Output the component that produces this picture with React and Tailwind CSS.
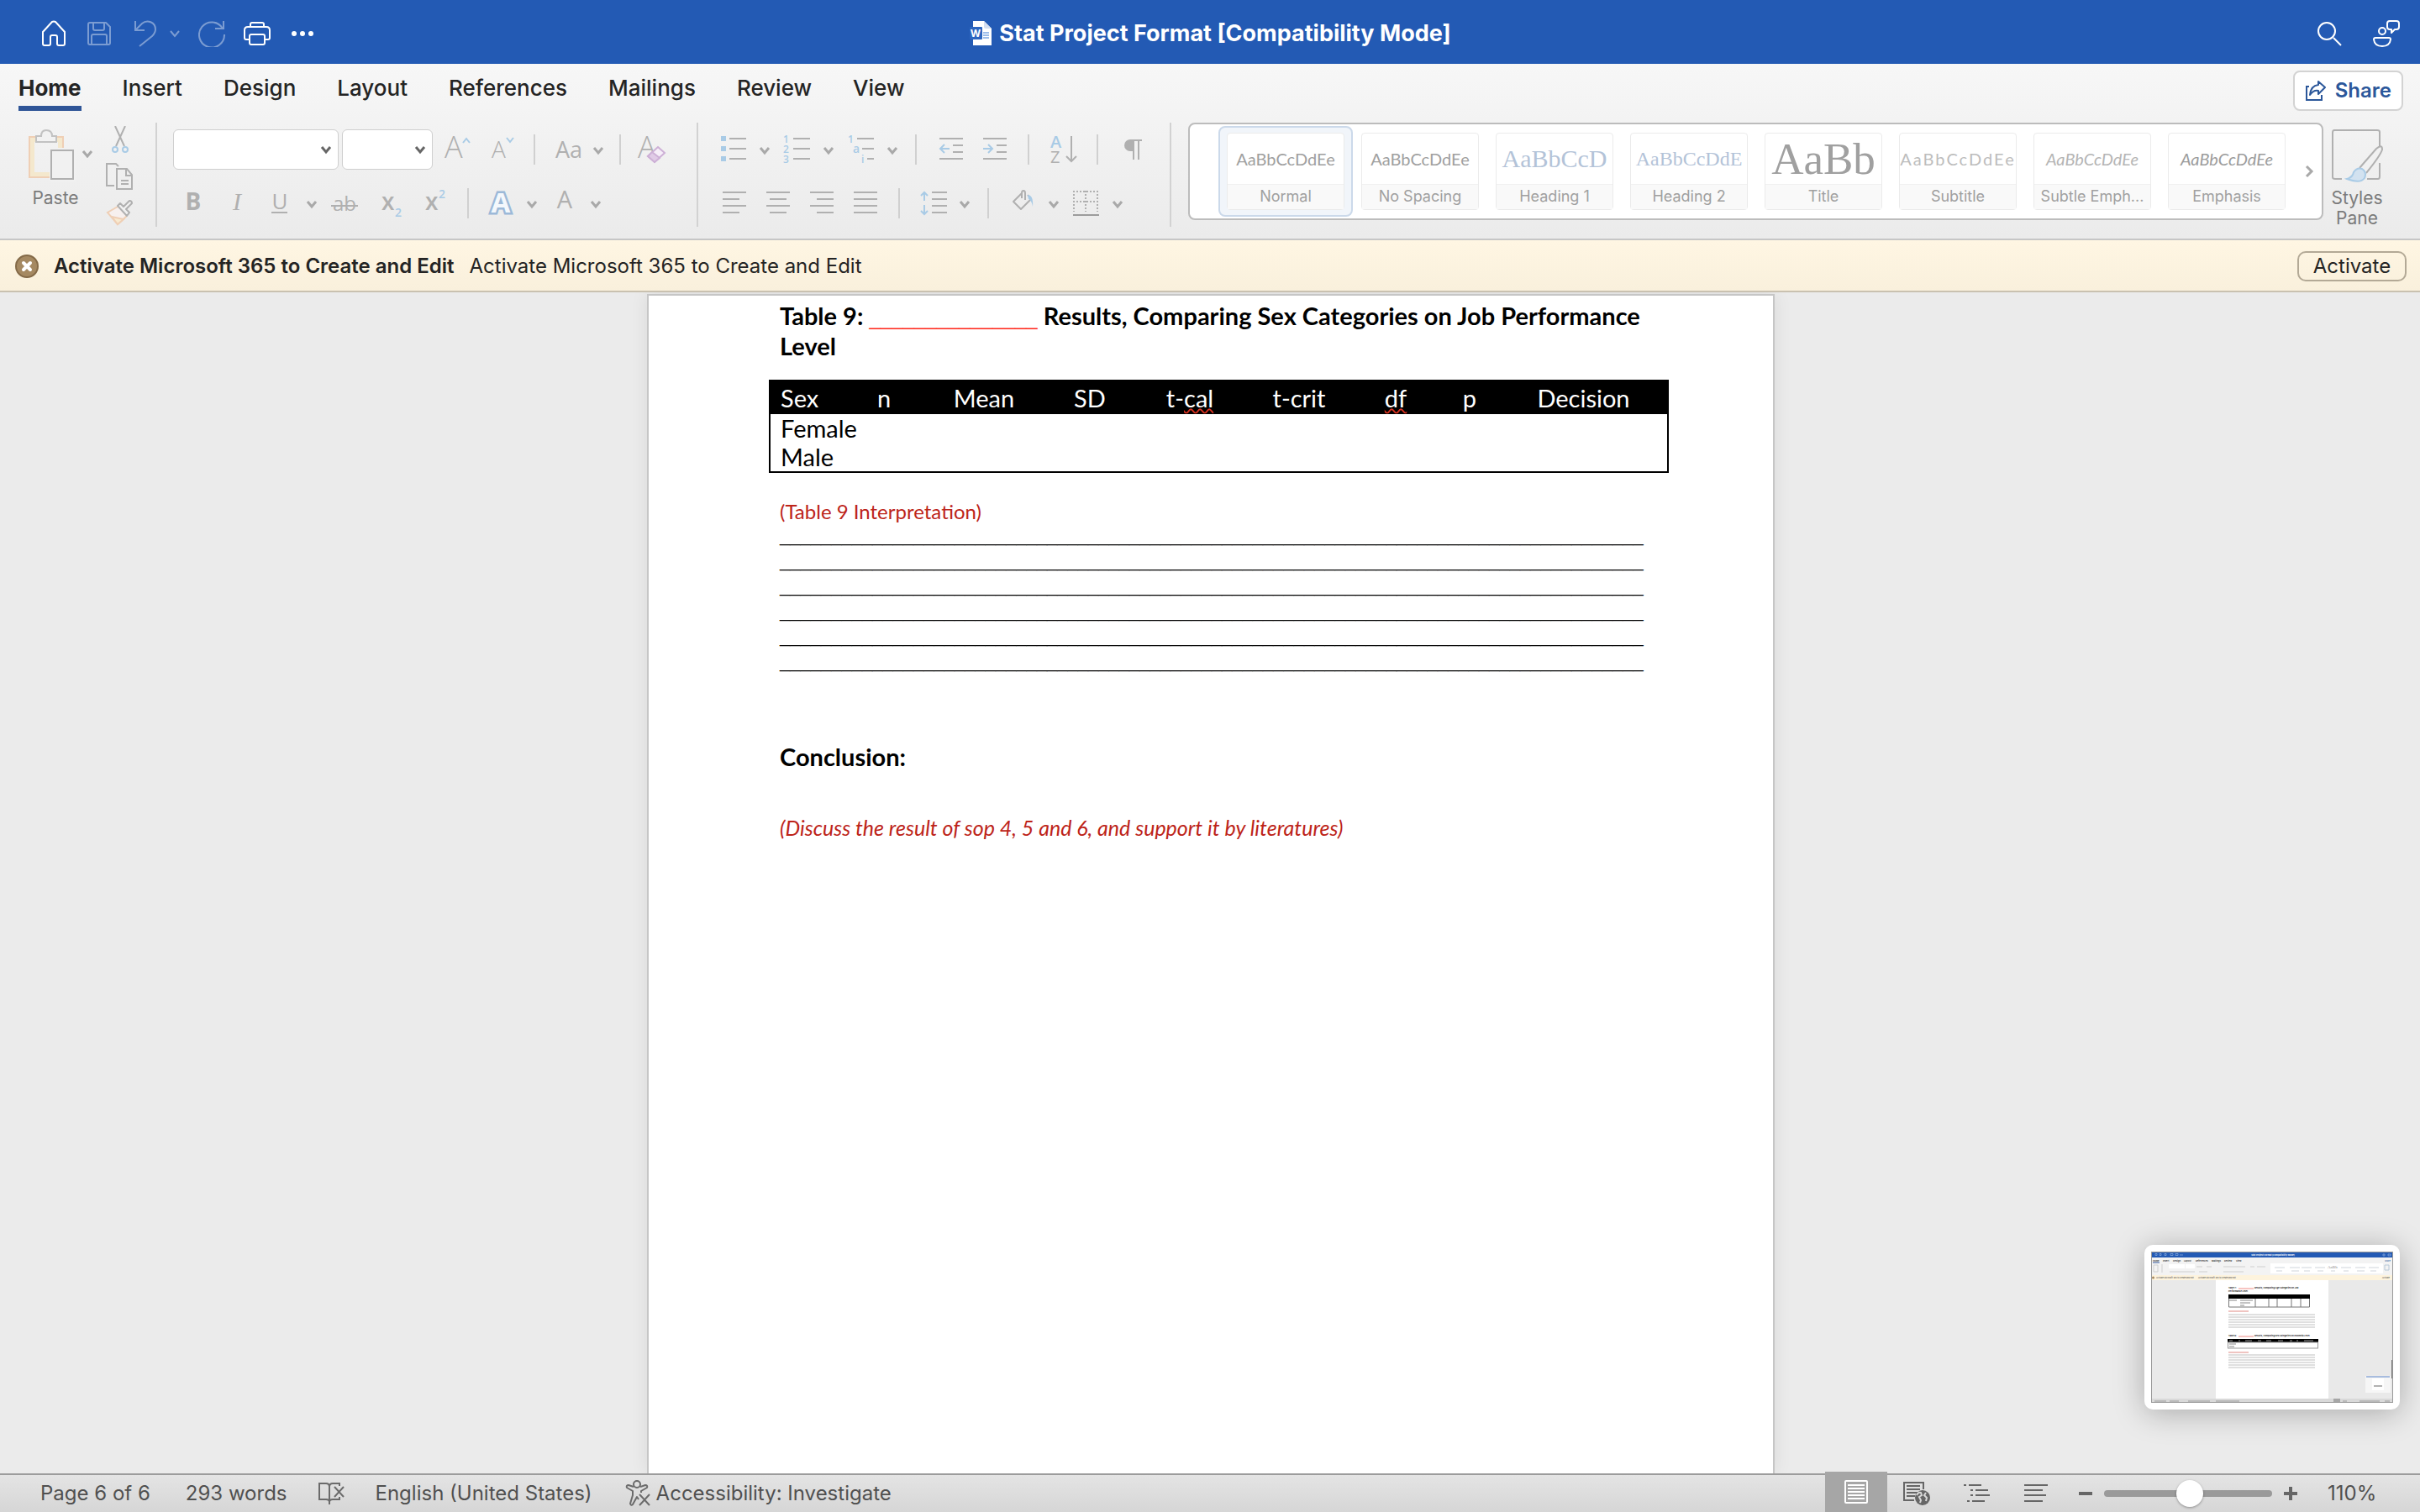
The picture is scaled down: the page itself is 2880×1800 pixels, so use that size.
import React, { Component } from "react";

const GRAY = "#b0b0b0";
const BLUE = "#a9cbe6";

/* Ribbon glyph, one full cell of a ribbon row */
const Glyph = ({ label, children }) => (
  <button
    type="button"
    aria-label={label}
    className="w-[52px] h-16 shrink-0 text-[#b0b0b0]"
  >
    <svg
      width="52"
      height="64"
      viewBox="0 0 52 64"
      fill="none"
      stroke={GRAY}
      strokeWidth="2"
      fontFamily="'Open Sans', sans-serif"
    >
      {children}
    </svg>
  </button>
);

const Letter = ({ x, y, size, color = GRAY, weight = 400, ...rest }) => (
  <text
    x={x}
    y={y}
    fontSize={size}
    fontWeight={weight}
    fill={color}
    stroke="none"
    {...rest}
  />
);

const Chevron = ({ label }) => (
  <button type="button" aria-label={label} className="w-6 h-16 shrink-0">
    <svg width="24" height="64" viewBox="0 0 24 64" fill="none">
      <path d="M6 30 11 36 16 30" stroke="#a9a9a9" strokeWidth="3" />
    </svg>
  </button>
);

const Divider = ({ wide }) => (
  <div
    className={`w-[2px] h-9 shrink-0 bg-[#d0d0d0] ${wide ? "mx-3.5" : "mx-3"}`}
  />
);

const GroupDivider = () => (
  <div className="w-[2px] h-[124px] shrink-0 self-start bg-[#d2d2d2]" />
);

const Combo = ({ label, className }) => (
  <div className={`relative h-12 shrink-0 ${className}`}>
    <select
      aria-label={label}
      className="w-full h-full appearance-none bg-white border border-[#cfcfcf] rounded-md"
    >
      <option></option>
    </select>
    <svg
      className="absolute right-2 top-[18px] pointer-events-none"
      width="14"
      height="12"
      viewBox="0 0 14 12"
      fill="none"
    >
      <path d="M2 3 7 9 12 3" stroke="#666" strokeWidth="3" />
    </svg>
  </div>
);

const BarButton = ({ label, dim, children }) => (
  <button
    type="button"
    aria-label={label}
    className={dim ? "shrink-0 opacity-40" : "shrink-0"}
  >
    <svg
      width="32"
      height="32"
      viewBox="0 0 32 32"
      fill="none"
      stroke="white"
      strokeWidth="2"
    >
      {children}
    </svg>
  </button>
);

const TitleBar = () => (
  <header className="h-[76px] pt-1 shrink-0 bg-[#235ab4] grid grid-cols-[1fr_auto_1fr] items-center">
    <div className="flex items-center gap-[22px] pl-12">
      <BarButton label="Home">
        <path
          d="M3 14 L14 2 Q16 1 18 2 L29 14 V28 Q29 30 27 30 H22 Q20 30 20 28 V20 Q20 18 18 18 H14 Q12 18 12 20 V28 Q12 30 10 30 H5 Q3 30 3 28 Z"
          strokeLinejoin="round"
        />
      </BarButton>
      <BarButton label="Save" dim>
        <path
          d="M5 3 H24 L29 8 V27 Q29 29 27 29 H5 Q3 29 3 27 V5 Q3 3 5 3 Z M9 3 V10 Q9 12 11 12 H20 Q22 12 22 10 V3 M7 29 V19 Q7 17 9 17 H23 Q25 17 25 19 V29"
          strokeLinejoin="round"
        />
      </BarButton>
      <div className="flex items-center">
        <BarButton label="Undo" dim>
          <path d="M5 1 V12 H16 M5 12 L13 4 C19 -1 29 2 29 11 C29 15 27 17 25 19 L10 31" />
        </BarButton>
        <button
          type="button"
          aria-label="Undo history"
          className="ml-3.5 opacity-40"
        >
          <svg width="12" height="10" viewBox="0 0 12 10" fill="none">
            <path d="M1 2 6 8 11 2" stroke="white" strokeWidth="2" />
          </svg>
        </button>
      </div>
      <BarButton label="Redo" dim>
        <path d="M30 1 V10 H20 M29 10 A15 15 0 1 0 31 17" />
      </BarButton>
      <BarButton label="Print">
        <path
          d="M8 8 V5 Q8 3 10 3 H22 Q24 3 24 5 V8 M7 23 H3 Q1 23 1 21 V12 Q1 8 5 8 H27 Q31 8 31 12 V21 Q31 23 29 23 H25 M9 17 H23 Q25 17 25 19 V27 Q25 29 23 29 H9 Q7 29 7 27 V19 Q7 17 9 17 Z"
          strokeLinejoin="round"
        />
      </BarButton>
      <BarButton label="More">
        <g fill="white" stroke="none">
          <circle cx="6" cy="16" r="3" />
          <circle cx="16" cy="16" r="3" />
          <circle cx="26" cy="16" r="3" />
        </g>
      </BarButton>
    </div>

    <div className="flex items-center gap-2">
      <svg width="28" height="32" viewBox="0 0 28 32">
        <path d="M5 1 H18 L27 10 V30 H5 Z" fill="white" />
        <path d="M18 1 V8 Q18 10 20 10 H27 Z" fill="#d5dff0" />
        <rect x="1" y="8" width="15" height="15" rx="1" fill="#2c66c0" />
        <text
          x="8"
          y="20"
          fontSize="12"
          fontWeight="700"
          fontFamily="Inter, sans-serif"
          fill="white"
          textAnchor="middle"
        >
          W
        </text>
        <path d="M17 15 H24 M17 18 H24 M17 21 H24" stroke="#3a7bd5" />
      </svg>
      <h1 className="text-[27px] font-bold text-white whitespace-nowrap">
        Stat Project Format [Compatibility Mode]
      </h1>
    </div>

    <div className="flex items-center justify-end gap-9 pr-6">
      <BarButton label="Search">
        <circle cx="13" cy="13" r="10" />
        <path d="M21 21 30 30" />
      </BarButton>
      <BarButton label="Comments">
        <circle cx="11" cy="13" r="4" />
        <path
          d="M3 21 H19 Q21 21 21 23 Q20 31 11 31 Q2 31 1 23 Q1 21 3 21 Z M20 1 H28 Q31 1 31 4 V8 Q31 11 28 11 H26 L22 15 V11 H20 Q17 11 17 8 V4 Q17 1 20 1 Z"
          strokeLinejoin="round"
        />
      </BarButton>
    </div>
  </header>
);

const TABS = [
  "Home",
  "Insert",
  "Design",
  "Layout",
  "References",
  "Mailings",
  "Review",
  "View",
];

const TabRow = () => (
  <div className="h-[70px] flex items-start justify-between pl-[22px] pr-5">
    <nav className="flex gap-[49px] pt-3">
      {TABS.map((tab, i) => (
        <button
          key={tab}
          type="button"
          className={
            i === 0
              ? "text-[26px] leading-[34px] font-bold text-[#242424] pb-1 border-b-6 border-[#2f5597]"
              : "text-[26px] leading-[34px] font-medium text-[#242424] pb-1 border-b-6 border-transparent"
          }
        >
          {tab}
        </button>
      ))}
    </nav>
    <button
      type="button"
      className="mt-2 h-12 px-3 flex items-center gap-2.5 bg-white border-2 border-[#d3d3d3] rounded-lg text-[24px] font-semibold text-[#2b579a]"
    >
      <svg
        width="26"
        height="26"
        viewBox="0 0 26 26"
        fill="none"
        stroke="#2b579a"
        strokeWidth="2"
      >
        <path d="M5 8 H2 V24 H20 V18" />
        <path
          d="M16 2 L24 9 L16 17 V13 Q10 12 6 18 Q7 7 16 6 Z"
          strokeLinejoin="round"
        />
      </svg>
      Share
    </button>
  </div>
);

const ClipboardGroup = () => (
  <div className="w-[185px] shrink-0 flex pl-8">
    <div className="flex flex-col items-center">
      <div className="flex items-start pt-2">
        <button type="button" aria-label="Paste clipboard">
          <svg width="58" height="62" viewBox="0 0 58 62" fill="none">
            <path d="M6 12 H40 V54 H6 Z" stroke="#f4e8cd" strokeWidth="6" />
            <path d="M27 57 H3 V9 H43 V22" stroke="#efcfb5" strokeWidth="2" />
            <rect x="27" y="22" width="32" height="40" fill="#f1f1f1" />
            <path
              d="M11 8 H17 Q17 1 23 1 Q30 1 30 8 H35 V15 H11 Z"
              fill="#f2f2f2"
              stroke="#c2c2c2"
              strokeWidth="2"
            />
            <path d="M29 25 H55 V59 H29 Z" stroke="#b0b0b0" strokeWidth="2" />
          </svg>
        </button>
        <button type="button" aria-label="Paste options" className="pt-6 pl-2">
          <svg width="14" height="10" viewBox="0 0 14 10" fill="none">
            <path d="M1 2 6 8 11 2" stroke="#a9a9a9" strokeWidth="3" />
          </svg>
        </button>
      </div>
      <span className="text-[21px] leading-6 text-[#7b7b7b] pt-2 pr-3">
        Paste
      </span>
    </div>
    <div className="flex flex-col gap-3 pl-3.5 pt-1">
      <button type="button" aria-label="Cut">
        <svg width="34" height="32" viewBox="0 0 34 32" fill="none">
          <path d="M11 0 22 24 M23 0 12 24" stroke="#b0b0b0" strokeWidth="2" />
          <circle cx="11" cy="28" r="3" stroke={BLUE} strokeWidth="2" />
          <circle cx="23" cy="28" r="3" stroke={BLUE} strokeWidth="2" />
        </svg>
      </button>
      <button type="button" aria-label="Copy">
        <svg
          width="34"
          height="32"
          viewBox="0 0 34 32"
          fill="none"
          stroke="#b0b0b0"
          strokeWidth="2"
        >
          <path d="M10 27 H1 V1 H12 L15 4" />
          <path d="M13 7 H25 L31 14 V31 H13 Z M24 7 V15 H31 M18 21 H27 M18 25 H27" />
        </svg>
      </button>
      <button type="button" aria-label="Format painter">
        <svg width="34" height="32" viewBox="0 0 34 32" fill="none">
          <path
            d="M14 8 L2 15 L14 29 L25 19"
            fill="#f7f0ee"
            stroke="#efcfb5"
            strokeWidth="2"
          />
          <path
            d="M7 20 L21 23 L14 29 Z"
            fill="#f8ead0"
            stroke="#efcfb5"
            strokeWidth="2"
          />
          <path
            d="M14 7 L17 4 L21 8 L28 1 Q31 1 31 4 L24 11 L28 15 L25 19 Z"
            fill="#f1f1f1"
            stroke="#b0b0b0"
            strokeWidth="2"
            strokeLinejoin="round"
          />
        </svg>
      </button>
    </div>
  </div>
);

const FontGroup = () => (
  <div className="w-[642px] shrink-0 pl-[17px]">
    <div className="flex items-center h-16 pl-[2px]">
      <Combo label="Font name" className="w-[197px]" />
      <Combo label="Font size" className="w-[108px] mx-1" />
      <Glyph label="Increase font size">
        <Letter x="10" y="42" size="36" weight="300">A</Letter>
        <path d="M32 24 36 19 40 24" stroke={BLUE} />
      </Glyph>
      <Glyph label="Decrease font size">
        <Letter x="14" y="42" size="28" weight="300">A</Letter>
        <path d="M32 18 36 23 40 18" stroke={BLUE} />
      </Glyph>
      <Divider />
      <Glyph label="Change case">
        <Letter x="12" y="42" size="27">Aa</Letter>
      </Glyph>
      <Chevron label="Case options" />
      <Divider />
      <Glyph label="Clear formatting">
        <Letter x="8" y="42" size="36" weight="300">A</Letter>
        <path d="M32 29 40 36 28 47 20 40 Z" fill="#f6eef8" stroke="#cdb0d6" />
        <path d="M25 35 34 42 28 47 20 40 Z" fill="#e0cbe6" stroke="#cdb0d6" />
      </Glyph>
    </div>
    <div className="flex items-center h-16">
      <Glyph label="Bold">
        <Letter x="26" y="40" size="28" weight="700" textAnchor="middle">B</Letter>
      </Glyph>
      <Glyph label="Italic">
        <Letter
          x="26"
          y="40"
          size="30"
          textAnchor="middle"
          fontStyle="italic"
          fontFamily="'Liberation Serif', serif"
        >
          I
        </Letter>
      </Glyph>
      <Glyph label="Underline">
        <Letter x="25" y="39" size="26" textAnchor="middle">U</Letter>
        <path d="M15 43 H34" />
      </Glyph>
      <Chevron label="Underline options" />
      <Glyph label="Strikethrough">
        <Letter x="26" y="41" size="24" textAnchor="middle">ab</Letter>
        <path d="M10 35 H42" />
      </Glyph>
      <div className="flex pl-1">
        <Glyph label="Subscript">
          <Letter x="14" y="40" size="28" weight="600">x</Letter>
          <Letter x="30" y="48" size="14" color={BLUE} weight="600">2</Letter>
        </Glyph>
        <Glyph label="Superscript">
          <Letter x="14" y="40" size="28" weight="600">x</Letter>
          <Letter x="30" y="26" size="14" color={BLUE} weight="600">2</Letter>
        </Glyph>
      </div>
      <Divider />
      <Glyph label="Text effects">
        <Letter
          x="26"
          y="43"
          size="33"
          weight="700"
          textAnchor="middle"
          color="#f4f8fc"
          style={{ stroke: "#9cb9d8", strokeWidth: 5, paintOrder: "stroke" }}
        >
          A
        </Letter>
      </Glyph>
      <Chevron label="Text effects options" />
      <Glyph label="Font color">
        <Letter x="26" y="38" size="29" textAnchor="middle">A</Letter>
      </Glyph>
      <Chevron label="Font color options" />
    </div>
  </div>
);

const ParagraphGroup = () => (
  <div className="w-[561px] shrink-0 pl-4">
    <div className="flex items-center h-16">
      <Glyph label="Bullets">
        <path
          d="M11 16 h6 v6 h-6 Z M11 28 h6 v6 h-6 Z M11 40 h6 v6 h-6 Z"
          fill={BLUE}
          stroke="none"
        />
        <path d="M21 19 H41 M21 31 H41 M21 43 H41" />
      </Glyph>
      <Chevron label="Bullet options" />
      <Glyph label="Numbering">
        <Letter x="9" y="24" size="12" color={BLUE} weight="600">1</Letter>
        <Letter x="9" y="36" size="12" color={BLUE} weight="600">2</Letter>
        <Letter x="9" y="48" size="12" color={BLUE} weight="600">3</Letter>
        <path d="M21 19 H41 M21 31 H41 M21 43 H41" />
      </Glyph>
      <Chevron label="Numbering options" />
      <Glyph label="Multilevel list">
        <Letter x="10" y="24" size="12" color={BLUE} weight="600">1</Letter>
        <Letter x="16" y="36" size="14" color={BLUE} weight="600">a</Letter>
        <Letter x="26" y="48" size="12" color={BLUE} weight="600">i</Letter>
        <path d="M21 19 H41 M27 31 H41 M33 43 H41" />
      </Glyph>
      <Chevron label="Multilevel options" />
      <Divider wide />
      <Glyph label="Decrease indent">
        <path d="M13 19 H41 M29 27 H41 M29 35 H41 M13 43 H41" />
        <path d="M25 31 H14 M19 26 14 31 19 36" stroke={BLUE} />
      </Glyph>
      <Glyph label="Increase indent">
        <path d="M13 19 H41 M29 27 H41 M29 35 H41 M13 43 H41" />
        <path d="M13 31 H24 M19 26 24 31 19 36" stroke={BLUE} />
      </Glyph>
      <Divider wide />
      <Glyph label="Sort">
        <Letter x="11" y="30" size="20" color={BLUE} weight="600">A</Letter>
        <Letter x="11" y="48" size="20">Z</Letter>
        <path d="M36 16 V46 M30 40 36 46 42 40" />
      </Glyph>
      <Divider wide />
      <Glyph label="Show paragraph marks">
        <path d="M28 20 H24 A7 7 0 0 0 24 34 H28 Z" fill={GRAY} stroke="none" />
        <path d="M24 21 H38 M28 21 V44 M34 21 V44" />
      </Glyph>
    </div>
    <div className="flex items-center h-16">
      <Glyph label="Align left">
        <path d="M13 19 H41 M13 27 H33 M13 35 H41 M13 43 H33" />
      </Glyph>
      <Glyph label="Align center">
        <path d="M13 19 H41 M17 27 H37 M13 35 H41 M17 43 H37" />
      </Glyph>
      <Glyph label="Align right">
        <path d="M13 19 H41 M21 27 H41 M13 35 H41 M21 43 H41" />
      </Glyph>
      <Glyph label="Justify">
        <path d="M13 19 H41 M13 27 H41 M13 35 H41 M13 43 H41" />
      </Glyph>
      <Divider wide />
      <Glyph label="Line spacing">
        <path
          d="M15 19 V29 M11 23 15 19 19 23 M15 34 V45 M11 41 15 45 19 41"
          stroke={BLUE}
        />
        <path d="M24 19 H42 M24 27 H42 M24 35 H42 M24 43 H42" />
      </Glyph>
      <Chevron label="Spacing options" />
      <Divider wide />
      <Glyph label="Shading">
        <path
          d="M25 20 L15 30 L24 39 L36 27 L32 22 M29 28 V20 Q29 17 27 17 Q25 17 25 20 V26"
          strokeLinejoin="round"
        />
        <path d="M32 22 Q39 22 38 36 Q37 29 33 27 Z" fill={BLUE} stroke="none" />
      </Glyph>
      <Chevron label="Shading options" />
      <Glyph label="Borders">
        <path
          d="M11 17 V42 M25 17 V42 M39 17 V42 M10 18 H41 M10 30 H41"
          strokeDasharray="2 2"
        />
        <path d="M10 46 H41" stroke="#9c9c9c" />
      </Glyph>
      <Chevron label="Border options" />
    </div>
  </div>
);

const STYLES = [
  { name: "Normal", sample: "AaBbCcDdEe", look: "font-[Lato] text-[20px] text-[#a0a0a0]" },
  { name: "No Spacing", sample: "AaBbCcDdEe", look: "font-[Lato] text-[20px] text-[#a0a0a0]" },
  { name: "Heading 1", sample: "AaBbCcD", look: "font-['Liberation_Serif'] text-[30px] text-[#b3c3d8]" },
  { name: "Heading 2", sample: "AaBbCcDdE", look: "font-['Liberation_Serif'] text-[24px] text-[#b3c3d8]" },
  { name: "Title", sample: "AaBb", look: "font-['Liberation_Serif'] text-[53px] text-[#a0a0a0]" },
  { name: "Subtitle", sample: "AaBbCcDdEe", look: "font-[Lato] text-[20px] tracking-widest text-[#bdbdbd]" },
  { name: "Subtle Emph...", sample: "AaBbCcDdEe", look: "font-[Lato] text-[20px] italic text-[#b5b5b5]" },
  { name: "Emphasis", sample: "AaBbCcDdEe", look: "font-[Lato] text-[20px] italic text-[#9c9c9c]" },
];

const StyleGallery = () => (
  <div className="ml-[20px] h-[116px] flex-1 flex items-center justify-between bg-white border-2 border-[#bcbcbc] rounded-lg pl-[34px] pr-2">
    <div className="flex">
      {STYLES.map((style, i) => (
        <button
          key={style.name}
          type="button"
          className={
            i === 0
              ? "w-40 h-[108px] p-2 border-2 border-[#cbd9ea] rounded-lg bg-[#f1f5fa]"
              : "w-40 h-[108px] p-2 border-2 border-transparent"
          }
        >
          <span className="h-[92px] -my-[2px] flex flex-col border border-[#ebebeb] rounded-sm bg-white">
            <span className="h-[60px] flex items-center justify-center">
              <span className={`whitespace-nowrap leading-[60px] ${style.look}`}>
                {style.sample}
              </span>
            </span>
            <span className="flex-1 bg-[#f9f9f9] border-t border-[#f1f1f1] text-[18px] leading-[28px] text-[#a0a0a0] whitespace-nowrap">
              {style.name}
            </span>
          </span>
        </button>
      ))}
    </div>
    <button type="button" aria-label="More styles">
      <svg width="12" height="16" viewBox="0 0 12 16" fill="none">
        <path d="M2 2 8 8 2 14" stroke="#a9a9a9" strokeWidth="3" />
      </svg>
    </button>
  </div>
);

const StylesPaneButton = () => (
  <button
    type="button"
    className="w-20 mr-[35px] pt-2 shrink-0 flex flex-col items-center text-[21px] leading-6 text-[#7b7b7b]"
  >
    <svg width="60" height="62" viewBox="0 0 60 62" fill="none" overflow="visible">
      <path
        d="M12 59 H4 Q1 59 1 57 V4 Q1 1 3 1 H54 Q57 1 57 3 V20 M57 40 V56 Q57 59 55 59 H42"
        stroke="#b0b0b0"
        strokeWidth="2"
      />
      <path
        d="M33 46 L53 23 Q60 17 60 24 Q58 31 41 52"
        fill="#f1f1f1"
        stroke="#b0b0b0"
        strokeWidth="2"
      />
      <path
        d="M18 59 Q25 57 26 51 Q30 45 36 47 Q42 51 39 58 Q34 65 18 59 Z"
        fill="#d2e2f0"
        stroke={BLUE}
        strokeWidth="2"
      />
    </svg>
    <span className="pt-2">
      Styles
      <br />
      Pane
    </span>
  </button>
);

const Ribbon = () => (
  <div className="shrink-0 bg-linear-to-b from-[#f7f7f7] to-[#ebebeb] border-b-2 border-[#c6c6c6]">
    <TabRow />
    <div className="h-[138px] flex items-start">
      <ClipboardGroup />
      <GroupDivider />
      <FontGroup />
      <GroupDivider />
      <ParagraphGroup />
      <GroupDivider />
      <StyleGallery />
      <StylesPaneButton />
    </div>
  </div>
);

const NoticeBar = () => (
  <div className="h-[62px] pt-[2px] shrink-0 flex items-center pl-[18px] pr-4 bg-linear-to-b from-[#fff6e3] to-[#f9f0dc] border-b-2 border-[#c9c1b0] text-[24px] text-[#242424]">
    <button type="button" aria-label="Dismiss">
      <svg width="28" height="28" viewBox="0 0 28 28" fill="none">
        <circle cx="14" cy="14" r="13" fill="#a58962" stroke="#846a48" strokeWidth="2" />
        <path
          d="M10 10 18 18 M18 10 10 18"
          stroke="white"
          strokeWidth="4"
          strokeLinecap="round"
        />
      </svg>
    </button>
    <strong className="font-semibold ml-[18px]">
      Activate Microsoft 365 to Create and Edit
    </strong>
    <span className="ml-[18px]">Activate Microsoft 365 to Create and Edit</span>
    <button
      type="button"
      className="ml-auto w-[130px] h-9 leading-8 border-2 border-[#b3a996] rounded-[10px]"
    >
      Activate
    </button>
  </div>
);

const COLUMNS = [
  { name: "Sex", width: "w-[91px]" },
  { name: "n", width: "w-[90px]" },
  { name: "Mean", width: "w-[148px]" },
  { name: "SD", width: "w-[104px]" },
  { name: "t-cal", width: "w-[134px]" },
  { name: "t-crit", width: "w-[126px]" },
  { name: "df", width: "w-[104px]" },
  { name: "p", width: "w-[72px]" },
  { name: "Decision", width: "w-[200px]" },
];

const Misspelled = ({ children }) => (
  <span className="underline decoration-wavy decoration-[#d8301f] decoration-2 underline-offset-1 [text-decoration-skip-ink:none]">
    {children}
  </span>
);

const ResultsTable = () => (
  <table className="mt-[22px] -ml-[13px] w-[calc(100%+43px)] table-fixed border-collapse border-2 border-black text-[29px] text-black">
    <thead>
      <tr className="h-10 bg-black text-white">
        {COLUMNS.map(({ name, width }) => (
          <th
            key={name}
            scope="col"
            className={`font-normal leading-9 whitespace-nowrap ${width} ${name === "Sex" ? "text-left pl-3" : "text-center"}`}
          >
            {name === "t-cal" ? (
              <>
                t-<Misspelled>cal</Misspelled>
              </>
            ) : name === "df" ? (
              <Misspelled>df</Misspelled>
            ) : (
              name
            )}
          </th>
        ))}
      </tr>
    </thead>
    <tbody>
      {["Female", "Male"].map((sex) => (
        <tr key={sex} className="leading-[34px]">
          <th scope="row" className="font-normal text-left pl-3">
            {sex}
          </th>
          {COLUMNS.slice(1).map(({ name }) => (
            <td key={name} />
          ))}
        </tr>
      ))}
    </tbody>
  </table>
);

const BLANK_LINE = "_".repeat(84);

const Document = () => (
  <main className="flex-1 min-h-0 overflow-hidden bg-[#ebebeb] pt-[2px] pl-[2px] flex justify-center">
    <article className="w-[1342px] px-[156px] pt-[6px] bg-white border-2 border-b-0 border-[#c6c6c6] shadow-[0_0_20px_rgba(0,0,0,0.08)] font-[Lato,sans-serif] text-black">
      <h2 className="text-[29px] leading-9 font-bold">
        Table 9:{" "}
        <span className="font-['Liberation_Sans'] text-[24px] leading-none font-normal text-[#ff2a1a]">
          {"_".repeat(15)}
        </span>{" "}
        Results, Comparing Sex Categories on Job Performance Level
      </h2>
      <ResultsTable />
      <p className="mt-8 text-[24px] leading-7 text-[#bd2419]">
        (Table 9 Interpretation)
      </p>
      <div className="font-['Liberation_Sans'] text-[22px] leading-[30px] whitespace-nowrap">
        {[1, 2, 3, 4, 5, 6].map((line) => (
          <p key={line}>{BLANK_LINE}</p>
        ))}
      </div>
      <h2 className="mt-20 text-[29px] leading-9 font-bold">Conclusion:</h2>
      <p className="mt-12 text-[25px] leading-9 italic text-[#bd2419]">
        (Discuss the result of sop 4, 5 and 6, and support it by literatures)
      </p>
    </article>
  </main>
);

/* Floating capture preview in the corner */
const Preview = () => {
  const ruled = (top) =>
    [0, 3, 6, 9, 12, 15].map((dy) => (
      <path key={dy} d={`M92 ${top + dy} H195`} stroke="#c0c0c0" />
    ));

  return (
    <div className="absolute right-6 bottom-[122px] w-[304px] h-[196px] p-2 bg-white rounded-[10px] shadow-[0_4px_36px_rgba(0,0,0,0.28)]">
      <svg
        width="288"
        height="180"
        viewBox="0 0 288 180"
        fontFamily="Inter, sans-serif"
        fontSize="2.6"
      >
        <rect width="288" height="180" fill="#e9e9e9" />
        <rect width="288" height="7" fill="#235ab4" />
        <g fill="none" stroke="#8fb0e0">
          <path
            d="M5 2.5h2v2h-2z M10 2.5h2v2h-2z M16 2.5h2v2h-2z M23 2.5h3v2h-3z M29 2.5h3v2h-3z M34 4h4 M276 3h2v2h-2z M282 3h3v2h-3z"
            strokeWidth="0.7"
          />
        </g>
        <text x="145" y="5" fill="white" fontWeight="700" textAnchor="middle">
          Stat Project Format [Compatibility Mode]
        </text>
        <rect y="7" width="288" height="21" fill="#f3f3f3" />
        <g fill="#333" fontWeight="600" fontSize="2.7">
          <text x="2" y="12">Home</text>
          <text x="14" y="12">Insert</text>
          <text x="26" y="12">Design</text>
          <text x="39" y="12">Layout</text>
          <text x="53" y="12">References</text>
          <text x="72" y="12">Mailings</text>
          <text x="87" y="12">Review</text>
          <text x="101" y="12">View</text>
        </g>
        <path d="M2 13 H10" stroke="#2f5597" />
        <text x="285" y="12" fill="#2b579a" textAnchor="end">Share</text>
        <rect x="21" y="15" width="19" height="5" fill="white" />
        <rect x="41" y="15" width="11" height="5" fill="white" />
        <path
          d="M3 16h5v8h-5z M13 15v10 M54 18h7 M66 18h6 M22 24h30 M57 24h10 M86 18h26 M86 24h24 M118 18h5 M126 18h10"
          fill="none"
          stroke="#cfcfcf"
        />
        <rect x="142" y="14" width="134" height="12" fill="white" />
        <path
          d="M147 19h12 M165 19h12 M179 19h12 M195 19h12 M226 19h12 M243 19h12 M259 19h12 M149 23h7 M167 23h9 M182 23h7 M198 23h7 M214 23h5 M229 23h6 M245 23h9 M261 23h7"
          stroke="#c3c9d2"
          strokeWidth="0.8"
        />
        <text x="210" y="20" fontSize="5" fill="#888" fontFamily="'Liberation Serif', serif">
          AaBb
        </text>
        <path d="M278 16h5v6h-5z" fill="none" stroke="#b8c9d8" />
        <rect y="28" width="288" height="6" fill="#fdf3dd" />
        <circle cx="2.5" cy="31" r="1.5" fill="#a58962" />
        <g fill="#444" fontSize="2.3">
          <text x="6" y="32">Activate Microsoft 365 to Create and Edit</text>
          <text x="56" y="32">Activate Microsoft 365 to Create and Edit</text>
          <text x="275" y="32">Activate</text>
        </g>
        <rect x="77" y="34" width="134" height="141" fill="white" />
        <g fontWeight="700" fill="#222" fontSize="2.5">
          <text x="92" y="44">Table 7:</text>
          <text x="123" y="44">Results, Comparing Age Categories on Job</text>
          <text x="92" y="48">Performance Level</text>
          <text x="92" y="101">Table 8:</text>
          <text x="123" y="101">Results, Comparing Sex Categories on Insomnia Level</text>
        </g>
        <path d="M104 44 H122 M104 101 H122" stroke="#ee8a84" />
        <rect x="92" y="51" width="97" height="5" fill="black" />
        <path
          d="M92.5 56 V66 H188.5 V56 M124 56 V66 M140 56 V66 M150 56 V66 M167 56 V66 M178 56 V66"
          fill="none"
          stroke="#777"
        />
        <path d="M106 58h15 M106 61h12 M106 64h5 M93 58h9" stroke="#888" />
        <path d="M92 71h24 M92 120h24" stroke="#e08a84" />
        {ruled(75)}
        <rect x="91" y="104" width="108" height="4" fill="black" />
        <path
          d="M93 106h4 M104 106h2 M112 106h8 M127 106h4 M137 106h6 M151 106h6 M165 106h3 M173 106h2 M182 106h11"
          stroke="#999"
        />
        <rect x="91.5" y="108" width="107" height="7" fill="none" stroke="#999" />
        <path d="M93 110h8 M93 113h6" stroke="#888" />
        {ruled(123)}
        <rect x="286" y="129" width="2" height="22" fill="#777" />
        <rect x="255" y="148" width="30" height="20" fill="#f6f6f6" />
        <path d="M256 149 H284" stroke="#5b83c6" />
        <rect x="263" y="151" width="14" height="14" fill="white" />
        <path d="M265 160 H275" stroke="#666" />
        <rect y="175" width="288" height="5" fill="#d9d9d9" />
        <path
          d="M4 178h14 M22 178h11 M44 178h26 M77 178h28 M228 178h5 M248 178h24 M278 178h6"
          stroke="#999"
        />
        <rect x="217" y="175" width="8" height="5" fill="#a6a6a6" />
        <rect x="0.5" y="0.5" width="287" height="179" fill="none" stroke="#999" />
      </svg>
    </div>
  );
};

class StatusBar extends Component {
  state = {
    zoom: 51,
  };

  handleZoom = (e) => {
    this.setState({ zoom: Number(e.target.value) });
  };

  render() {
    const { zoom } = this.state;

    return (
      <footer className="h-[46px] shrink-0 flex items-center pl-12 pr-12 bg-linear-to-b from-[#e4e4e4] to-[#d6d6d6] border-t-2 border-[#9c9c9c] text-[24px] text-[#505050]">
        <span>Page 6 of 6</span>
        <span className="ml-[42px]">293 words</span>
        <button type="button" aria-label="Proofing" className="ml-9">
          <svg
            width="34"
            height="32"
            viewBox="0 0 34 32"
            fill="none"
            stroke="#6b6b6b"
            strokeWidth="2"
          >
            <path d="M14 26 Q14 23 10 23 H2 V4 H10 Q14 4 14 8 Z V29 M14 8 Q14 4 18 4 H26 V7 M14 26 Q14 23 18 23 H26 V20" />
            <path d="M20 8 31 20 M31 8 20 20" />
          </svg>
        </button>
        <span className="ml-[35px]">English (United States)</span>
        <button type="button" className="ml-[38px] flex items-center gap-1">
          <svg
            width="34"
            height="32"
            viewBox="0 0 34 32"
            fill="none"
            stroke="#6b6b6b"
            strokeWidth="2"
            strokeLinejoin="round"
          >
            <circle cx="15" cy="5" r="4" />
            <path d="M11 8 L5 6 Q2 6 3 9 L10 13 V18 L7 28 Q8 31 10 29 L15 20 L17 23 M19 8 L25 6 Q28 6 27 9 L20 13 V15" />
            <path d="M18 17 30 30 M30 17 18 30" />
          </svg>
          Accessibility: Investigate
        </button>

        <button
          type="button"
          aria-label="Print layout"
          className="ml-auto -mt-1 w-[74px] h-12 flex items-center justify-center bg-[#a6a6a6]"
        >
          <svg width="28" height="28" viewBox="0 0 28 28" fill="none" stroke="white" strokeWidth="2">
            <rect x="1" y="1" width="26" height="26" rx="1" />
            <path d="M4 6 H24 M4 10 H24 M4 14 H24 M4 18 H24 M4 22 H24" />
          </svg>
        </button>
        <button type="button" aria-label="Web layout" className="ml-[18px]">
          <svg width="34" height="30" viewBox="0 0 34 30" fill="none" stroke="#666" strokeWidth="2">
            <path d="M14 23 H2 V2 H25 V10 M5 6 H21 M5 10 H21 M5 14 H18 M5 18 H15" />
            <circle cx="24" cy="20" r="9" fill="#666" stroke="none" />
            <path d="M17 17 Q19 13 22 14 L23 17 L20 19 L22 23 L21 26 M28 14 L26 17 L29 20 L28 24" stroke="#d8d8d8" />
          </svg>
        </button>
        <button type="button" aria-label="Outline view" className="ml-[38px]">
          <svg width="34" height="26" viewBox="0 0 34 26" fill="none" stroke="#666" strokeWidth="2">
            <path d="M1 3 H4 M7 3 H22 M9 9 H12 M15 9 H30 M9 15 H12 M15 15 H32 M5 22 H8 M11 22 H26" />
          </svg>
        </button>
        <button type="button" aria-label="Draft view" className="ml-[38px]">
          <svg width="30" height="26" viewBox="0 0 30 26" fill="none" stroke="#666" strokeWidth="2">
            <path d="M1 3 H29 M1 9 H23 M1 15 H27 M1 22 H23" />
          </svg>
        </button>
        <button type="button" aria-label="Zoom out" className="ml-9">
          <svg width="16" height="16" viewBox="0 0 16 16">
            <path d="M0 8 H16" stroke="#666" strokeWidth="4" />
          </svg>
        </button>
        <input
          type="range"
          min="0"
          max="100"
          value={zoom}
          onChange={this.handleZoom}
          aria-label="Zoom"
          className="mx-3.5 w-[200px] h-2 appearance-none rounded-full bg-[#9a9a9a] [&::-webkit-slider-thumb]:appearance-none [&::-webkit-slider-thumb]:w-8 [&::-webkit-slider-thumb]:h-8 [&::-webkit-slider-thumb]:rounded-full [&::-webkit-slider-thumb]:bg-white [&::-webkit-slider-thumb]:shadow-[0_1px_3px_rgba(0,0,0,0.35)]"
        />
        <button type="button" aria-label="Zoom in">
          <svg width="16" height="16" viewBox="0 0 16 16">
            <path d="M0 8 H16 M8 0 V16" stroke="#666" strokeWidth="4" />
          </svg>
        </button>
        <span className="w-[62px] ml-9">110%</span>
      </footer>
    );
  }
}

const App = () => (
  <div className="relative h-screen flex flex-col overflow-hidden bg-[#ebebeb] font-[Inter,sans-serif]">
    <TitleBar />
    <Ribbon />
    <NoticeBar />
    <Document />
    <StatusBar />
    <Preview />
  </div>
);

export default App;
